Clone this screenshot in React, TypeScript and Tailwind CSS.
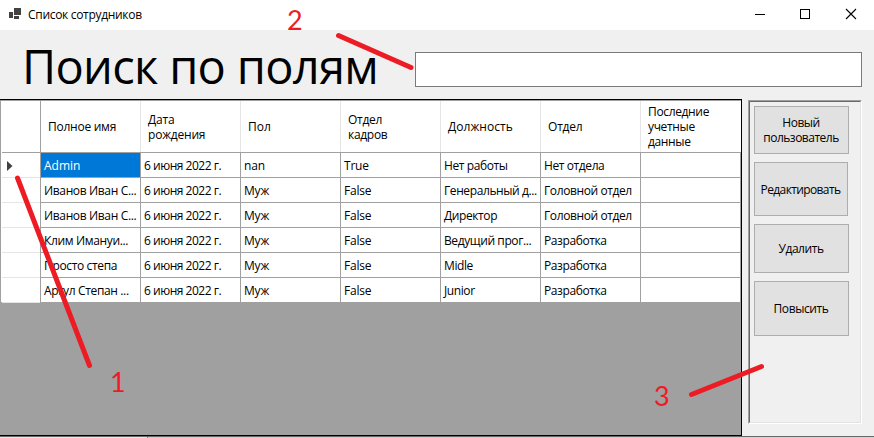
const columns = [
  { label: 'Полное имя', tracking: 'tracking-[-0.25px]' },
  { label: 'Дата\nрождения', tracking: 'tracking-[-0.2px]' },
  { label: 'Пол', tracking: 'tracking-[0px]' },
  { label: 'Отдел\nкадров', tracking: 'tracking-[-0.3px]' },
  { label: 'Должность', tracking: 'tracking-[0.05px]' },
  { label: 'Отдел', tracking: 'tracking-[-0.2px]' },
  { label: 'Последние\nучетные\nданные', tracking: 'tracking-[-0.35px]' },
];

const cellTracking = [
  'tracking-[-0.35px]',
  'tracking-[-0.48px]',
  'tracking-[-0.2px]',
  'tracking-[-0.2px]',
  'tracking-[-0.4px]',
  'tracking-[-0.4px]',
  '',
];

const rows = [
  ['Admin', '6 июня 2022 г.', 'nan', 'True', 'Нет работы', 'Нет отдела', ''],
  ['Иванов Иван С...', '6 июня 2022 г.', 'Муж', 'False', 'Генеральный д...', 'Головной отдел', ''],
  ['Иванов Иван С...', '6 июня 2022 г.', 'Муж', 'False', 'Директор', 'Головной отдел', ''],
  ['Клим Имануи...', '6 июня 2022 г.', 'Муж', 'False', 'Ведущий прог...', 'Разработка', ''],
  ['Просто степа', '6 июня 2022 г.', 'Муж', 'False', 'Midle', 'Разработка', ''],
  ['Аргул Степан ...', '6 июня 2022 г.', 'Муж', 'False', 'Junior', 'Разработка', ''],
];

const actions = [
  { label: 'Новый\nпользователь', size: 'w-[95px] h-[48px] tracking-[-0.5px]' },
  { label: 'Редактировать', size: 'w-[94px] h-[54px] mt-[8px] tracking-[-0.62px]' },
  { label: 'Удалить', size: 'w-[95px] h-[49px] mt-[8px] tracking-[-0.45px]' },
  { label: 'Повысить', size: 'w-[95px] h-[55px] mt-[8px] tracking-[-0.4px]' },
];

function TitleBar() {
  return (
    <header className="flex h-[30px] items-center bg-white">
      <svg className="ml-[9px] mb-[3px] shrink-0" width="12" height="11" fill="#424242" shapeRendering="crispEdges">
        <path d="M5 0h7v7H5zM0 4h4v6H0zM5 8h5v3H5z" />
      </svg>
      <span className="ml-[7px] grow text-[12px] leading-[16px] tracking-[-0.31px]">Список сотрудников</span>
      <svg className="mb-[2px] mr-[17px] shrink-0" width="102" height="12" fill="none" stroke="#000">
        <path d="M0 6.500h10M45.500 1.500h9v9h-9z" shapeRendering="crispEdges" />
        <path d="M91 1l10 10M101 1L91 11" strokeWidth="1.100" />
      </svg>
    </header>
  );
}

function Grid() {
  return (
    <section className="flex h-[337px] w-[742px] flex-col border-y border-r border-black bg-[#a0a0a0]">
      <div className="mt-px flex h-[51px] bg-white">
        <div className="w-[41px] shrink-0 border-x border-[#a0a0a0]" />
        {columns.map((c) => (
          <div
            key={c.label}
            className={
              'flex w-[100px] shrink-0 items-center whitespace-pre border-r border-[#e5e5e5] pl-[7px] leading-[15px] last:border-white ' +
              c.tracking
            }
          >
            {c.label}
          </div>
        ))}
      </div>
      {rows.map((r, i) => (
        <div key={i} className="flex h-[25px]">
          <div className="flex w-[41px] shrink-0 border-x border-[#a0a0a0] bg-white pl-px">
            <div className={'flex grow items-center border-t pl-[5px] pt-px ' + (i === 0 ? 'border-[#a0a0a0]' : 'border-[#e5e5e5]')}>
              {i === 0 && (
                <svg width="6" height="10" fill="#404040">
                  <path d="M0 0l5.500 5L0 10z" />
                </svg>
              )}
            </div>
          </div>
          {r.map((c, j) => (
            <div
              key={j}
              className={
                'w-[100px] shrink-0 whitespace-pre border-r border-t border-[#a0a0a0] pl-[3px] leading-[25px] ' +
                (i === 0 && j === 0 ? 'bg-[#0078d7] tracking-normal text-white' : 'bg-white ' + cellTracking[j])
              }
            >
              {c}
            </div>
          ))}
        </div>
      ))}
      <div className="ml-[2px] h-px w-[38px] bg-[#e5e5e5]" />
    </section>
  );
}

function ActionPanel() {
  return (
    <aside className="ml-[6px] mt-px h-[324px] w-[114px] border border-b-white border-l-[#a0a0a0] border-r-white border-t-[#a0a0a0]">
      <div className="h-full border border-b-[#e3e3e3] border-l-[#696969] border-r-[#e3e3e3] border-t-[#696969] pl-[4px] pt-[4px]">
        {actions.map((a) => (
          <button
            key={a.label}
            className={'flex items-center justify-center whitespace-pre border border-[#adadad] bg-[#e1e1e1] pr-px text-center leading-[15px] ' + a.size}
          >
            {a.label}
          </button>
        ))}
      </div>
    </aside>
  );
}

function Annotations() {
  return (
    <div className="pointer-events-none absolute inset-0 font-['Lato',sans-serif] text-[27px] leading-[27px] tracking-normal text-[#ed1c24]">
      <svg width="874" height="438" fill="none" stroke="#ed1c24" strokeWidth="5" strokeLinecap="round">
        <path d="M17.500 178L89.500 365.500M338.500 35.500L411 67.500M691.500 394.500L761.500 366.500" />
      </svg>
      <span className="absolute left-[110px] top-[368px]">1</span>
      <span className="absolute left-[287px] top-[6px]">2</span>
      <span className="absolute left-[654px] top-[382px]">3</span>
    </div>
  );
}

export default function App() {
  return (
    <div className="relative h-[438px] w-[874px] overflow-hidden bg-[#f0f0f0] font-['Open_Sans','Noto_Sans',sans-serif] text-[12px] tracking-[-0.2px] text-black">
      <TitleBar />
      <div className="flex h-[69px]">
        <h1 className="ml-[22px] mt-[9px] h-[54px] w-[393px] shrink-0 whitespace-nowrap text-[47px] leading-[54px] tracking-[-0.7px]">
          Поиск по полям
        </h1>
        <input className="mt-[22px] h-[35px] w-[447px] border border-[#7a7a7a] bg-white" />
      </div>
      <main className="flex h-[337px]">
        <Grid />
        <ActionPanel />
      </main>
      <footer className="flex h-[2px] border-t border-[#696969] bg-[#d0d0d0]">
        <div className="w-[148px] border-r border-[#808080] bg-[#e8e8e8]" />
      </footer>
      <Annotations />
    </div>
  );
}
